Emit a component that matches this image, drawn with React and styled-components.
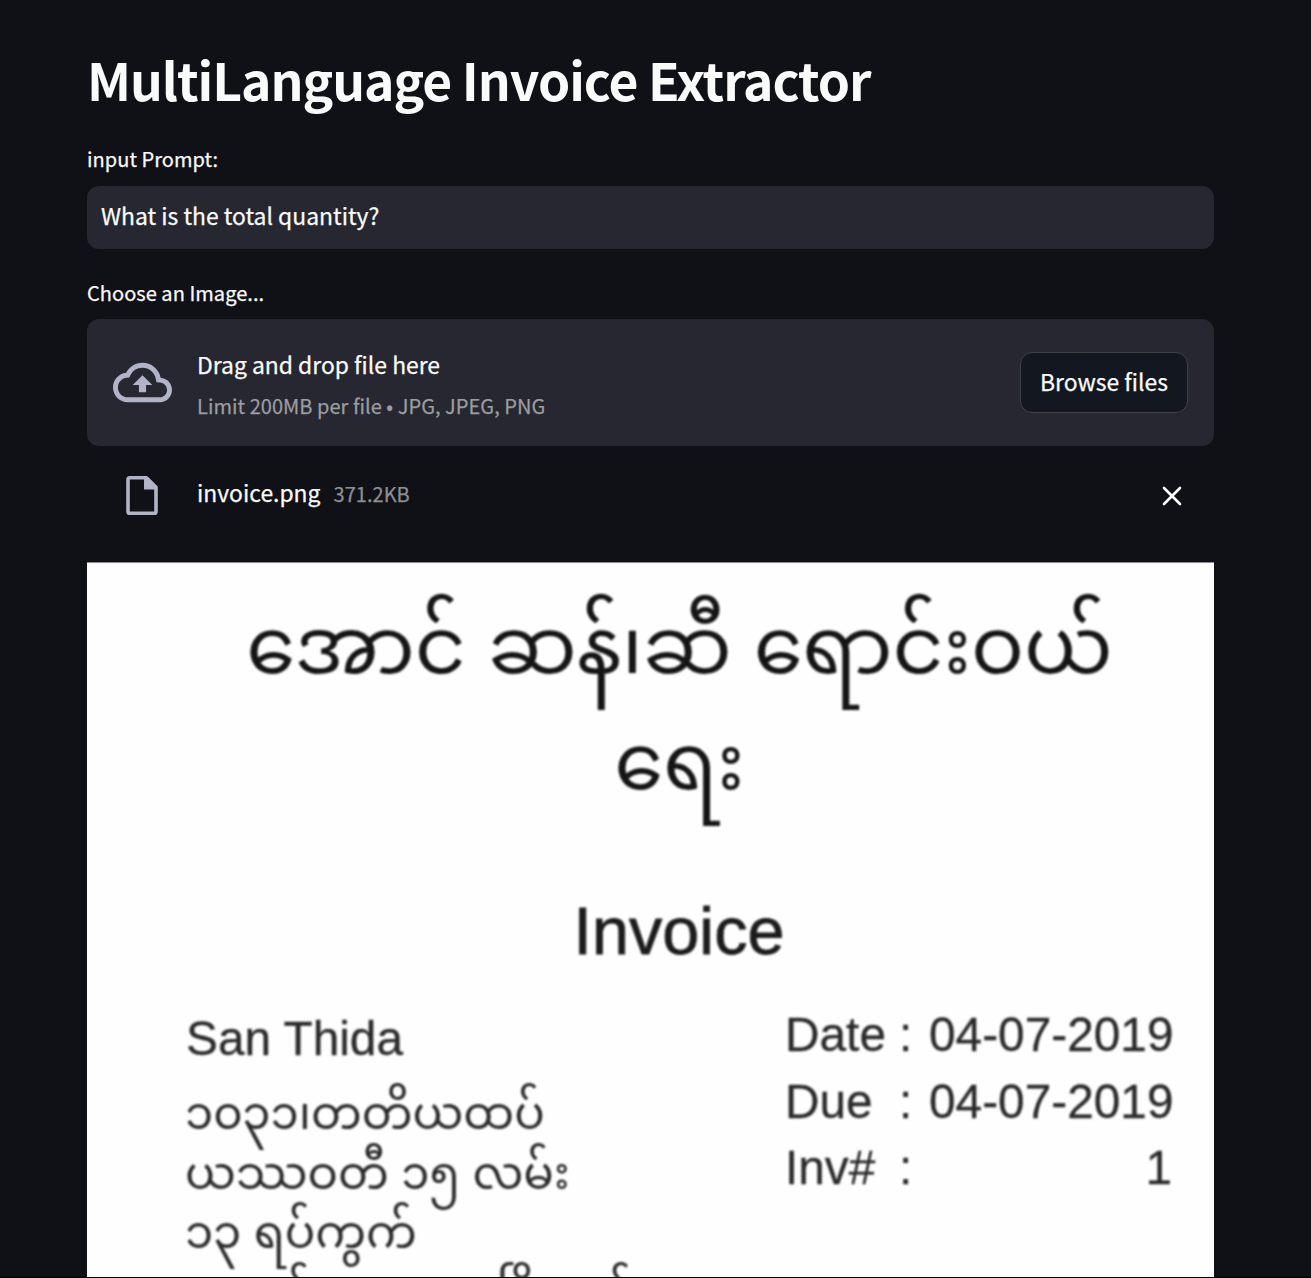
import React from "react";
import styled, { createGlobalStyle } from "styled-components";

const GlobalStyle = createGlobalStyle`
  *, *::before, *::after { box-sizing: border-box; }
  html, body { margin: 0; background: #0f1116; }
  body {
    height: 1278px;
    overflow: hidden;
    color: #fafafa;
    font-family: "Noto Sans CJK JP", "Noto Sans", sans-serif;
  }
`;

const Page = styled.main`
  display: flex;
  flex-direction: column;
  height: 1278px;
  padding: 44px 97px 0 87px;
  overflow: hidden;
  border-bottom: 1px solid #000;
  -webkit-text-stroke: 0.25px;
`;

const Title = styled.h1`
  margin: 0 0 31px;
  height: 70px;
  font-size: 51.6px;
  line-height: 70px;
  font-weight: 700;
  letter-spacing: -1.06px;
  white-space: nowrap;
  -webkit-text-stroke: 0;
`;

const Label = styled.label`
  display: block;
  height: 28px;
  margin-bottom: ${(p) => p.$gap}px;
  font-size: 20px;
  line-height: 28px;
  letter-spacing: 0.04px;
`;

const PromptInput = styled.input`
  flex: none;
  width: 100%;
  height: 63px;
  margin: 0 0 30px;
  padding: 0 14px 5px;
  border: 0;
  border-radius: 12px;
  outline: 0;
  background: #262730;
  color: #fafafa;
  font: inherit;
  font-size: 22.9px;
  -webkit-text-stroke: 0.25px;
`;

const Dropzone = styled.section`
  display: flex;
  flex: none;
  align-items: center;
  height: 127px;
  padding: 0 26px 0 25px;
  border-radius: 12px;
  background: #262730;
`;

const IconSlot = styled.span`
  display: flex;
  flex: none;
  justify-content: center;
  width: 61px;
  margin-right: 24px;
  padding-right: ${(p) => p.$nudge || 0}px;
  color: #b1b4c7;
  svg { display: block; }
`;

const DropText = styled.div`
  display: flex;
  flex: 1;
  flex-direction: column;
  gap: 6px;
  padding-top: 4px;
`;

const Primary = styled.span`
  font-size: 22.9px;
  line-height: 36px;
  white-space: nowrap;
`;

const Muted = styled.span`
  color: ${(p) => p.$color};
  font-size: 20px;
  line-height: 36px;
  letter-spacing: 0.04px;
  white-space: nowrap;
`;

const BrowseButton = styled.button`
  width: 168px;
  height: 61px;
  padding: 0 0 4px;
  border: 1px solid #41434c;
  border-radius: 12px;
  background: #131720;
  color: #fafafa;
  font: inherit;
  font-size: 22.9px;
  -webkit-text-stroke: 0.25px;
`;

const FileRow = styled.div`
  display: flex;
  flex: none;
  align-items: center;
  height: 99px;
  padding: 0 32px 0 25px;
`;

const FileName = styled.div`
  display: flex;
  flex: 1;
  align-items: baseline;
  gap: 13px;
  padding-bottom: 6px;
`;

const RemoveButton = styled.button`
  display: flex;
  padding: 0;
  border: 0;
  background: none;
  color: #fff;
`;

const Invoice = styled.article`
  flex: none;
  height: 715px;
  margin-top: 17px;
  padding-top: 25px;
  overflow: hidden;
  border-top: 1px solid #8d8b8b;
  background: #fefefe;
  color: #1c1c1c;
  font-family: "Liberation Sans", "Noto Sans Myanmar", "Padauk", "Myanmar Text", sans-serif;
`;

const ShopName = styled.h2`
  margin: 0;
  padding-left: 58px;
  color: #151515;
  text-align: center;
  font-size: 78.8px;
  line-height: 116px;
  font-weight: 400;
  filter: blur(0.8px);
  -webkit-text-stroke: 0;
  span { display: block; white-space: nowrap; }
`;

const InvoiceHeading = styled.h3`
  margin: 61px 0 0;
  padding-left: 57px;
  text-align: center;
  font-size: 66.6px;
  line-height: 100px;
  font-weight: 400;
  filter: blur(0.8px);
  -webkit-text-stroke: 0.8px;
`;

const Details = styled.div`
  display: flex;
  justify-content: space-between;
  padding: 20px 42px 0 99px;
  color: #2a2a2a;
  filter: blur(0.8px);
  -webkit-text-stroke: 0.3px;
`;

const Customer = styled.div`
  padding-top: 4px;
  font-size: 47.8px;
  line-height: 68px;
`;

const Address = styled.address`
  margin: 11px 0 0 -1px;
  font-size: 45.2px;
  font-style: normal;
  line-height: 59.6px;
  white-space: nowrap;
  -webkit-text-stroke: 0;
  span { display: block; }
`;

const Facts = styled.dl`
  display: grid;
  grid-template-columns: 114px 30px 243px;
  grid-auto-rows: 66.5px;
  margin: 0;
  font-size: 47.8px;
  line-height: 67px;
  white-space: nowrap;
  dt, dd { margin: 0; }
  dd { text-align: right; }
`;

const CloudUpload = () => (
  <svg width="59" height="59" viewBox="0 0 24 24" fill="currentColor">
    <path d="M19.35 10.04A7.49 7.49 0 0 0 12 4C9.11 4 6.6 5.64 5.35 8.04A5.994 5.994 0 0 0 0 14c0 3.31 2.69 6 6 6h13c2.76 0 5-2.24 5-5 0-2.64-2.05-4.78-4.65-4.96zM19 18H6c-2.21 0-4-1.79-4-4 0-2.05 1.53-3.76 3.56-3.97l1.07-.11.5-.95A5.469 5.469 0 0 1 12 6c2.62 0 4.88 1.86 5.39 4.43l.3 1.5 1.53.11A2.98 2.98 0 0 1 22 15c0 1.65-1.35 3-3 3zM8 13h2.55v3h2.9v-3H16l-4-4z" />
  </svg>
);

const FileIcon = () => (
  <svg width="32" height="39" viewBox="0 0 32 39">
    <path d="M3.8 1.8H20.5L30 11.3V35.4Q30 37.2 28.2 37.2H3.8Q2 37.2 2 35.4V3.6Q2 1.8 3.8 1.8Z" fill="none" stroke="currentColor" strokeWidth="3.6" strokeLinejoin="round" />
    <path d="M18 2V13.4H30V11.3L20.5 2Z" fill="currentColor" />
  </svg>
);

const CloseIcon = () => (
  <svg width="20" height="20" viewBox="0 0 20 20">
    <path d="M2 2L18 18M18 2L2 18" stroke="currentColor" strokeWidth="2.6" strokeLinecap="round" />
  </svg>
);

const facts = [
  ["Date", "04-07-2019"],
  ["Due", "04-07-2019"],
  ["Inv#", "1"],
];

const addressLines = ["၁၀၃၁၊တတိယထပ်", "ယဿဝတီ ၁၅ လမ်း", "၁၃ ရပ်ကွက်", "တောင်ဥက္ကလာပမြို့နယ်"];

export default function App() {
  return (
    <>
      <GlobalStyle />
      <Page>
        <Title>MultiLanguage Invoice Extractor</Title>
        <Label htmlFor="prompt" $gap={13}>input Prompt:</Label>
        <PromptInput id="prompt" defaultValue="What is the total quantity?" />
        <Label as="div" $gap={12}>Choose an Image...</Label>
        <Dropzone>
          <IconSlot><CloudUpload /></IconSlot>
          <DropText>
            <Primary>Drag and drop file here</Primary>
            <Muted $color="#9c9da0">Limit 200MB per file • JPG, JPEG, PNG</Muted>
          </DropText>
          <BrowseButton type="button">Browse files</BrowseButton>
        </Dropzone>
        <FileRow>
          <IconSlot $nudge={2}><FileIcon /></IconSlot>
          <FileName>
            <Primary>invoice.png</Primary>
            <Muted $color="#8e8f92">371.2KB</Muted>
          </FileName>
          <RemoveButton type="button" aria-label="Remove file"><CloseIcon /></RemoveButton>
        </FileRow>
        <Invoice>
          <ShopName>
            <span>အောင် ဆန်၊ဆီ ရောင်းဝယ်</span>
            <span>ရေး</span>
          </ShopName>
          <InvoiceHeading>Invoice</InvoiceHeading>
          <Details>
            <div>
              <Customer>San Thida</Customer>
              <Address>
                {addressLines.map((line) => <span key={line}>{line}</span>)}
              </Address>
            </div>
            <Facts>
              {facts.map(([name, value]) => (
                <React.Fragment key={name}>
                  <dt>{name}</dt>
                  <span>:</span>
                  <dd>{value}</dd>
                </React.Fragment>
              ))}
            </Facts>
          </Details>
        </Invoice>
      </Page>
    </>
  );
}
